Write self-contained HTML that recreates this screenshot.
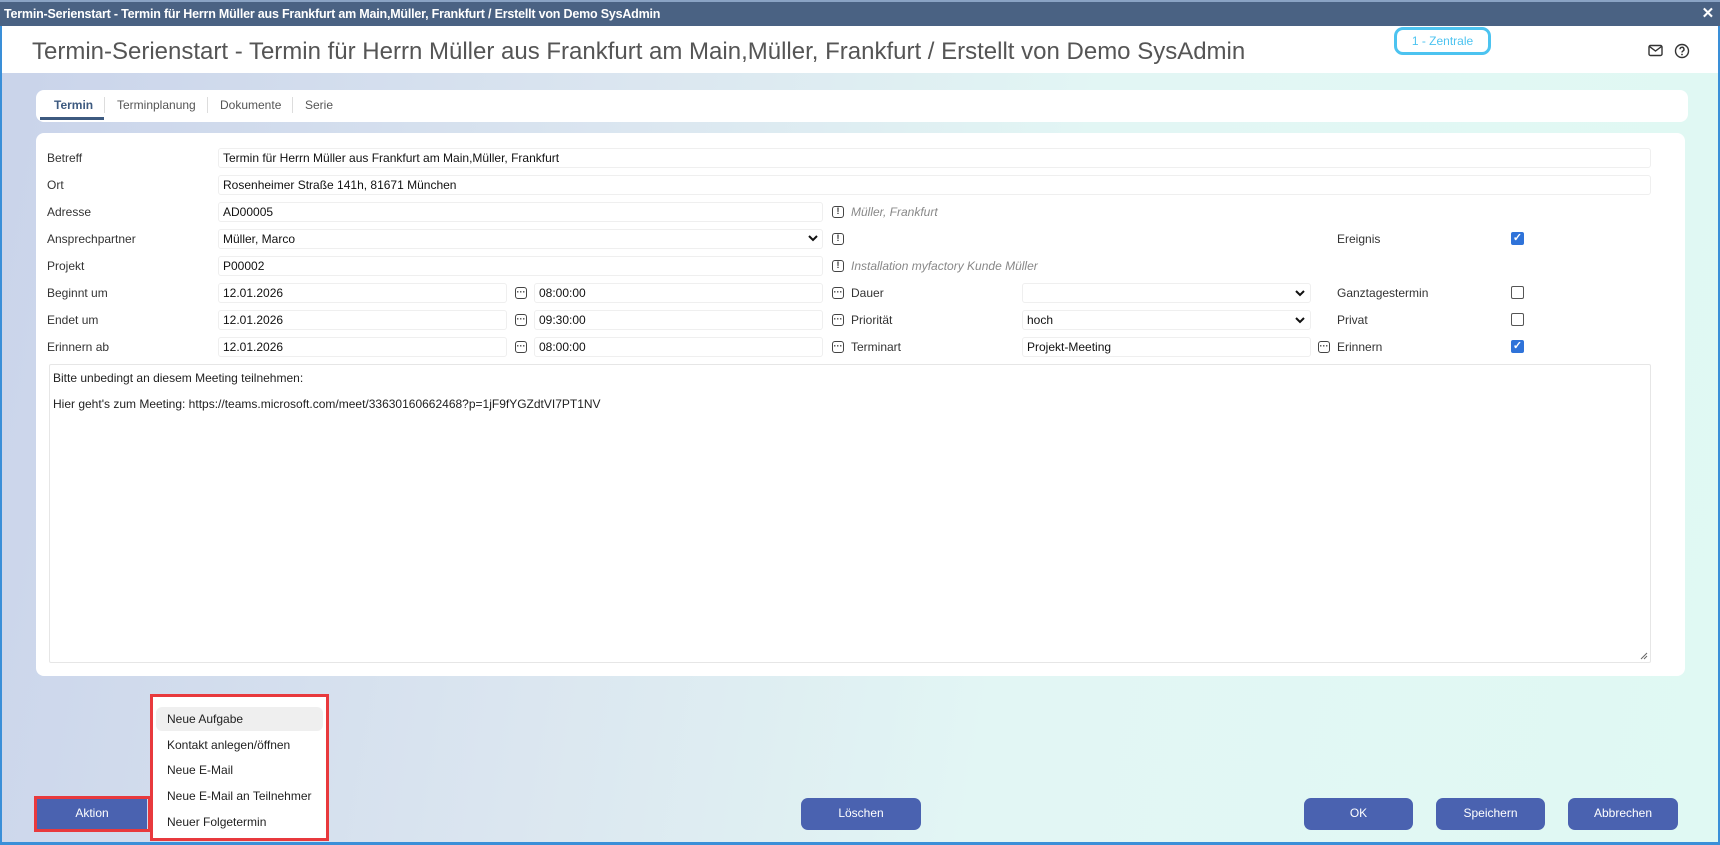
<!DOCTYPE html>
<html><head><meta charset="utf-8"><style>
*{box-sizing:border-box;margin:0;padding:0}
body{width:1720px;height:845px;overflow:hidden;font-family:"Liberation Sans",Arial,sans-serif;font-size:12px;color:#222;position:relative;background:#fff}
.abs{position:absolute;white-space:nowrap}
#win{position:absolute;left:0;top:0;width:1720px;height:845px;border:2px solid #3a8fd8;border-top:none;background:linear-gradient(100deg,#c9d3ea 0%,#dbe6f0 35%,#e2f6f4 60%,#e0f9f3 100%)}
#tb{position:absolute;left:0;top:0;width:1720px;height:26px;background:#4a6283;border-top:2px solid #8aa3c4;color:#fff;font-weight:bold;font-size:12.5px;line-height:24px;padding-left:4px;letter-spacing:-0.2px;white-space:nowrap}
#hdr{position:absolute;left:2px;top:26px;width:1716px;height:47px;background:#fff}
.card{position:absolute;background:#fff;border-radius:8px}
.lbl{position:absolute;font-size:12px;color:#333;white-space:nowrap}
.inp{position:absolute;height:20px;border:1px solid #efefef;border-radius:3px;background:#fff;padding-left:4px;line-height:18px;font-size:12px;color:#111;white-space:nowrap}
.ic{position:absolute;width:12px;height:12px;border:1.3px solid #444;border-radius:3px;font-size:9px;line-height:9px;text-align:center;font-weight:bold;color:#333}
.it{position:absolute;font-style:italic;color:#888;font-size:12px;white-space:nowrap}
.cb{position:absolute;width:13px;height:13px;border:1.3px solid #555;border-radius:2px;background:#fff}
.cbk{background:#2f73d9;border-color:#2f73d9;color:#fff;font-size:11px;line-height:11px;text-align:center;font-weight:bold}
.btn{position:absolute;height:31px;background:#4a62b0;border-radius:7px;color:#fff;text-align:center;line-height:31px;font-size:12px}
.mi{position:absolute;left:0;width:100%;padding-left:11px;font-size:12px;color:#222;height:24px;line-height:24px;white-space:nowrap}
</style></head><body>
<div id="win"></div>
<div id="tb">Termin-Serienstart - Termin für Herrn Müller aus Frankfurt am Main,Müller, Frankfurt / Erstellt von Demo SysAdmin<span style="position:absolute;right:6px;top:0;font-size:15px">✕</span></div>
<div id="hdr"></div>
<div class="abs" style="left:32px;top:38px;font-size:24px;color:#555">Termin-Serienstart - Termin für Herrn Müller aus Frankfurt am Main,Müller, Frankfurt / Erstellt von Demo SysAdmin</div>
<div class="abs" style="left:1394px;top:27px;width:97px;height:28px;border:3px solid #4cc3f0;border-radius:9px;color:#4cc3f0;font-size:12px;text-align:center;line-height:22px">1 - Zentrale</div>
<svg class="abs" style="left:1648px;top:44px" width="15" height="13" viewBox="0 0 15 13"><rect x="1" y="1.5" width="13" height="10" rx="1.5" fill="none" stroke="#333" stroke-width="1.4"/><path d="M1.5 2.5 L7.5 7 L13.5 2.5" fill="none" stroke="#333" stroke-width="1.4"/></svg>
<svg class="abs" style="left:1674px;top:43px" width="16" height="16" viewBox="0 0 16 16"><circle cx="8" cy="8" r="6.5" fill="none" stroke="#333" stroke-width="1.4"/><path d="M6 6.3a2 2 0 1 1 2.8 1.8c-.6.3-.8.7-.8 1.4" fill="none" stroke="#333" stroke-width="1.4"/><circle cx="8" cy="11.5" r=".9" fill="#333"/></svg>

<div class="card" style="left:36px;top:90px;width:1652px;height:32px"></div>
<div class="abs" style="left:54px;top:98px;font-weight:bold;color:#3d5a80">Termin</div>
<div class="abs" style="left:40px;top:117px;width:64px;height:3px;background:#3d5a80"></div>
<div class="abs" style="left:104px;top:97px;width:1px;height:16px;background:#ddd"></div>
<div class="abs" style="left:117px;top:98px;color:#555">Terminplanung</div>
<div class="abs" style="left:207px;top:97px;width:1px;height:16px;background:#ddd"></div>
<div class="abs" style="left:220px;top:98px;color:#555">Dokumente</div>
<div class="abs" style="left:292px;top:97px;width:1px;height:16px;background:#ddd"></div>
<div class="abs" style="left:305px;top:98px;color:#555">Serie</div>

<div class="card" style="left:36px;top:133px;width:1649px;height:543px"></div>

<div class="lbl" style="left:47px;top:151px">Betreff</div>
<div class="inp" style="left:218px;top:148px;width:1433px">Termin für Herrn Müller aus Frankfurt am Main,Müller, Frankfurt</div>
<div class="lbl" style="left:47px;top:178px">Ort</div>
<div class="inp" style="left:218px;top:175px;width:1433px">Rosenheimer Straße 141h, 81671 München</div>

<div class="lbl" style="left:47px;top:205px">Adresse</div>
<div class="inp" style="left:218px;top:202px;width:605px">AD00005</div>
<div class="ic" style="left:832px;top:206px">!</div>
<div class="it" style="left:851px;top:205px">Müller, Frankfurt</div>

<div class="lbl" style="left:47px;top:232px">Ansprechpartner</div>
<div class="inp" style="left:218px;top:229px;width:605px">Müller, Marco</div>
<svg class="abs" style="left:808px;top:234px" width="10" height="8" viewBox="0 0 10 8"><path d="M1 2 L5 6 L9 2" fill="none" stroke="#111" stroke-width="2"/></svg>
<div class="ic" style="left:832px;top:233px">!</div>
<div class="lbl" style="left:1337px;top:232px">Ereignis</div>
<div class="cb cbk" style="left:1511px;top:232px">✓</div>

<div class="lbl" style="left:47px;top:259px">Projekt</div>
<div class="inp" style="left:218px;top:256px;width:605px">P00002</div>
<div class="ic" style="left:832px;top:260px">!</div>
<div class="it" style="left:851px;top:259px">Installation myfactory Kunde Müller</div>

<div class="lbl" style="left:47px;top:286px">Beginnt um</div>
<div class="inp" style="left:218px;top:283px;width:289px">12.01.2026</div>
<div class="ic" style="left:515px;top:287px">···</div>
<div class="inp" style="left:534px;top:283px;width:289px">08:00:00</div>
<div class="ic" style="left:832px;top:287px">···</div>
<div class="lbl" style="left:851px;top:286px">Dauer</div>
<div class="inp" style="left:1022px;top:283px;width:289px"></div>
<svg class="abs" style="left:1295px;top:289px" width="10" height="8" viewBox="0 0 10 8"><path d="M1 2 L5 6 L9 2" fill="none" stroke="#111" stroke-width="2"/></svg>
<div class="lbl" style="left:1337px;top:286px">Ganztagestermin</div>
<div class="cb" style="left:1511px;top:286px"></div>

<div class="lbl" style="left:47px;top:313px">Endet um</div>
<div class="inp" style="left:218px;top:310px;width:289px">12.01.2026</div>
<div class="ic" style="left:515px;top:314px">···</div>
<div class="inp" style="left:534px;top:310px;width:289px">09:30:00</div>
<div class="ic" style="left:832px;top:314px">···</div>
<div class="lbl" style="left:851px;top:313px">Priorität</div>
<div class="inp" style="left:1022px;top:310px;width:289px">hoch</div>
<svg class="abs" style="left:1295px;top:316px" width="10" height="8" viewBox="0 0 10 8"><path d="M1 2 L5 6 L9 2" fill="none" stroke="#111" stroke-width="2"/></svg>
<div class="lbl" style="left:1337px;top:313px">Privat</div>
<div class="cb" style="left:1511px;top:313px"></div>

<div class="lbl" style="left:47px;top:340px">Erinnern ab</div>
<div class="inp" style="left:218px;top:337px;width:289px">12.01.2026</div>
<div class="ic" style="left:515px;top:341px">···</div>
<div class="inp" style="left:534px;top:337px;width:289px">08:00:00</div>
<div class="ic" style="left:832px;top:341px">···</div>
<div class="lbl" style="left:851px;top:340px">Terminart</div>
<div class="inp" style="left:1022px;top:337px;width:289px">Projekt-Meeting</div>
<div class="ic" style="left:1318px;top:341px">···</div>
<div class="lbl" style="left:1337px;top:340px">Erinnern</div>
<div class="cb cbk" style="left:1511px;top:340px">✓</div>

<div class="abs" style="left:49px;top:364px;width:1602px;height:299px;border:1px solid #e6e6e6;border-radius:2px;padding:0 3px;line-height:26px;font-size:12px;white-space:normal">Bitte unbedingt an diesem Meeting teilnehmen:<br>Hier geht's zum Meeting: https://teams.microsoft.com/meet/33630160662468?p=1jF9fYGZdtVI7PT1NV</div>
<svg class="abs" style="left:1640px;top:652px" width="8" height="8" viewBox="0 0 8 8"><path d="M1 7 L7 1 M4 7 L7 4" stroke="#666" stroke-width="1"/></svg>

<div class="btn" style="left:37px;top:798px;width:110px;height:31px;border-radius:0">Aktion</div>
<div class="abs" style="left:34px;top:796px;width:117px;height:36px;border:3px solid #e8393d"></div>
<div class="abs" style="left:150px;top:694px;width:179px;height:147px;border:3px solid #e8393d;background:#fff"></div>
<div class="abs" style="left:156px;top:704px;width:167px;height:130px">
<div class="mi" style="top:3px;background:#efefef;border-radius:6px">Neue Aufgabe</div>
<div class="mi" style="top:29px">Kontakt anlegen/öffnen</div>
<div class="mi" style="top:54px">Neue E-Mail</div>
<div class="mi" style="top:80px">Neue E-Mail an Teilnehmer</div>
<div class="mi" style="top:106px">Neuer Folgetermin</div>
</div>

<div class="btn" style="left:801px;top:798px;width:120px;height:32px">Löschen</div>
<div class="btn" style="left:1304px;top:798px;width:109px;height:32px">OK</div>
<div class="btn" style="left:1436px;top:798px;width:109px;height:32px">Speichern</div>
<div class="btn" style="left:1568px;top:798px;width:110px;height:32px">Abbrechen</div>
<div class="abs" style="left:0;top:842px;width:1720px;height:3px;background:#3a8fd8"></div>
</body></html>
